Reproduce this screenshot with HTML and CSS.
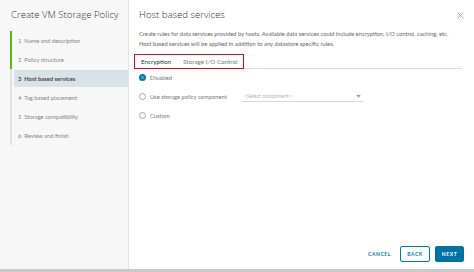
FILE: index.html
```html
<!DOCTYPE html>
<html lang="en">
  <head>
    <meta charset="UTF-8" />
    <meta name="viewport" content="width=device-width, initial-scale=1.0" />
    <title>Create VM Storage Policy</title>
    <link rel="stylesheet" href="styles.css">
  </head>
  <body>
    <div class="dialog">
      <aside class="sidebar">
        <h1 class="sidebar-title">Create VM Storage Policy</h1>
        <ul class="steps">
          <li class="step done"><span class="step-label">1&nbsp; Name and description</span></li>
          <li class="step done"><span class="step-label">2&nbsp; Policy structure</span></li>
          <li class="step active"><span class="step-label">3&nbsp; Host based services</span></li>
          <li class="step"><span class="step-label">4&nbsp; Tag based placement</span></li>
          <li class="step"><span class="step-label">5&nbsp; Storage compatibility</span></li>
          <li class="step"><span class="step-label">6&nbsp; Review and finish</span></li>
        </ul>
      </aside>

      <main class="main">
        <div class="main-header">
          <h2 class="main-title">Host based services</h2>
          <svg class="close-icon" viewBox="0 0 10 10" fill="none" stroke="#8c8c8c" stroke-width="1">
            <path d="M1 1 9 9M9 1 1 9" />
          </svg>
        </div>

        <p class="intro">
          Create rules for data services provided by hosts. Available data services could include encryption, I/O control, caching, etc.<br />
          Host based services will be applied in addition to any datastore specific rules.
        </p>

        <div class="tabbar">
          <div class="tabs">
            <span class="tab tab-active">Encryption</span>
            <span class="tab">Storage I/O Control</span>
          </div>
        </div>

        <div class="options">
          <label class="option">
            <span class="radio radio-checked"></span>
            Disabled
          </label>
          <label class="option">
            <span class="radio"></span>
            Use storage policy component
            <span class="select">
              <span>&lt;Select component&gt;</span>
              <svg class="select-arrow" viewBox="0 0 6 4" fill="#9a9a9a"><path d="M0 0h6L3 3.5z" /></svg>
            </span>
          </label>
          <label class="option">
            <span class="radio"></span>
            Custom
          </label>
        </div>

        <div class="footer">
          <button class="btn btn-link">CANCEL</button>
          <button class="btn btn-outline">BACK</button>
          <button class="btn btn-primary">NEXT</button>
        </div>
      </main>
    </div>
  </body>
</html>
```

FILE: styles.css
```css
* {
  margin: 0;
  padding: 0;
  box-sizing: border-box;
}
html {
  background-color: #c9c9c9;
}
body {
  font-family: Lato, "Open Sans", sans-serif;
  color: #565656;
}

.dialog {
  display: flex;
  height: 269px;
  background-color: #ffffff;
}

.sidebar {
  width: 129px;
  background-color: #f7f7f7;
  border-right: 1px solid #e3e3e3;
  padding: 8px 0 0 10px;
}
.sidebar-title {
  font-family: "Open Sans", Lato, sans-serif;
  font-size: 9.6px;
  font-weight: 300;
  color: #333;
  line-height: 14px;
  padding-left: 1px;
  white-space: nowrap;
}
.steps {
  list-style: none;
  margin-top: 9px;
}
.step {
  border-left: 2px solid #e0e0e0;
  height: 19px;
  display: flex;
  align-items: stretch;
}
.step.done {
  border-left-color: #60b515;
}
.step-label {
  flex: 1;
  margin: 1px 0 1px 2px;
  padding-left: 4px;
  font-size: 5.8px;
  line-height: 17px;
  color: #858585;
  white-space: nowrap;
}
.step.active .step-label {
  background-color: #d8e3e9;
  color: #444;
  font-weight: 700;
}

.main {
  flex: 1;
  display: flex;
  flex-direction: column;
  padding: 8px 10px 7px 10px;
}
.main-header {
  display: flex;
  align-items: center;
  justify-content: space-between;
}
.main-title {
  font-family: "Open Sans", Lato, sans-serif;
  font-size: 9.6px;
  font-weight: 300;
  color: #333;
  line-height: 14px;
}
.close-icon {
  width: 7px;
  height: 7px;
}
.intro {
  margin-top: 7px;
  font-size: 5.8px;
  line-height: 10px;
  color: #666;
  white-space: nowrap;
}

.tabbar {
  display: flex;
  margin: 5px 0 0 -5px;
  border-bottom: 1px solid #dcdcdc;
  width: 328px;
}
.tabs {
  display: flex;
  gap: 12px;
  border: 1.5px solid #d0102a;
  padding: 2px 5px 2px 6px;
  margin-bottom: -1px;
}
.tab {
  font-size: 6.3px;
  line-height: 9px;
  color: #777;
}
.tab-active {
  color: #333;
}

.options {
  display: flex;
  flex-direction: column;
  gap: 9px;
  margin-top: 4px;
}
.option {
  display: flex;
  align-items: center;
  gap: 4px;
  font-size: 5.8px;
  line-height: 9.5px;
  color: #777;
}
.radio {
  width: 7px;
  height: 7px;
  border-radius: 50%;
  border: 1px solid #a6a6a6;
  background-color: #fff;
}
.radio-checked {
  border: 2px solid #0079b8;
  background-color: #fff;
  box-shadow: inset 0 0 0 1px #0079b8;
}
.select {
  display: flex;
  align-items: center;
  justify-content: space-between;
  width: 121px;
  margin-left: 11px;
  padding: 0 2px;
  border-bottom: 1px solid #d6d6d6;
  color: #b3b3b3;
  font-size: 5.3px;
}
.select-arrow {
  width: 5px;
  height: 3px;
}

.footer {
  margin-top: auto;
  display: flex;
  justify-content: flex-end;
  align-items: center;
  gap: 5px;
}
.btn {
  font-family: Lato, "Open Sans", sans-serif;
  font-size: 5px;
  font-weight: 700;
  letter-spacing: 0.6px;
  height: 16px;
  border-radius: 2px;
  cursor: pointer;
}
.btn-link {
  background: none;
  border: none;
  color: #0079b8;
  padding: 0 4px;
}
.btn-outline {
  background: #fff;
  border: 1px solid #0079b8;
  color: #0079b8;
  width: 30px;
}
.btn-primary {
  background: #0072a3;
  border: 1px solid #0072a3;
  color: #fff;
  width: 29px;
}
```
